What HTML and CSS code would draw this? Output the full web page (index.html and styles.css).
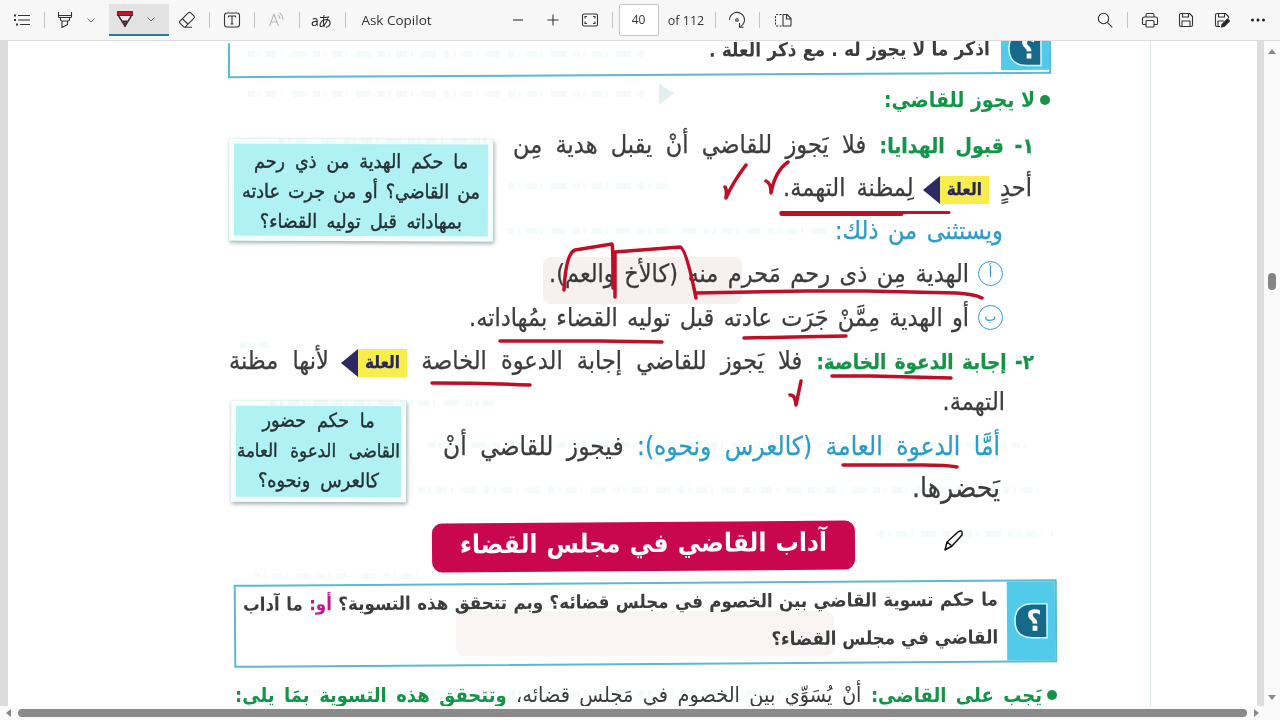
FILE: index.html
```
<!DOCTYPE html>
<html lang="ar">
<head>
    <meta charset="UTF-8">
    <meta name="viewport" content="width=device-width, initial-scale=1.0">
    <title>PDF</title>
    <link rel="stylesheet" href="styles.css">
</head>
<body>
    <header class="toolbar">
        <svg class="icon" viewBox="0 0 20 20"><path d="M6 5.500h12M6 10h12M8 14.500h10"/><path d="M2 5.500h2M2 10h2M4 14.500h2" stroke-width="2"/></svg>
        <i class="sep"></i>
        <svg class="icon" viewBox="0 0 20 20"><path d="M3.500 2v4.500q0 1 1 1h11q1 0 1-1V2M4 5.500h12M5.500 7.500v2q0 1.500 1.500 1.500h6q1.500 0 1.500-1.500v-2M7 11v6.500l5.500-3V11"/></svg>
        <svg class="chevron" viewBox="0 0 8 8"><path d="M.5 2.500 4 6l3.500-3.500"/></svg>
        <i></i>
        <div class="tool-active">
            <svg class="icon" viewBox="0 0 20 20"><path d="M3 3h14l-1 5-6 9.500L4 8z" fill="#eee"/><path d="M2.500 2.500h15v4h-15z" fill="#c4142d" stroke="#8c1424"/><path d="m8 12.500 2 5 2-5z" fill="#c4142d"/><path d="m4 7 3 5h6l3-5"/></svg>
            <svg class="chevron" viewBox="0 0 8 8"><path d="M.5 2.500 4 6l3.500-3.500"/></svg>
        </div>
        <svg class="icon" viewBox="0 0 20 20"><path d="m11 3.200-8 8q-1 1 0 2l3.500 3.500q1 1 2 0l8.500-8.500q1-1 0-2l-3.500-3.500q-1.200-1-2.500.5zM5.500 9l6 5.500M7.500 17.300H15"/></svg>
        <i class="sep"></i>
        <svg class="icon" viewBox="0 0 20 20"><rect x="2.500" y="3" width="15" height="14" rx="2.500"/><path d="M6.500 7.500V6h7v1.500M10 6v8M8.500 14h3"/></svg>
        <i class="sep"></i>
        <svg class="icon faded" viewBox="0 0 20 20"><path d="m2.500 16 4.500-12 4.500 12M4 12h6M11 5q2 1.500 2 4M12.500 3q3.500 2.500 3.500 7"/></svg>
        <i class="sep"></i>
        <span class="translate">aあ</span>
        <i class="sep"></i>
        <span class="label">Ask Copilot</span>
        <i></i>
        <svg class="icon" viewBox="0 0 20 20"><path d="M5 10h10"/></svg>
        <svg class="icon" viewBox="0 0 20 20"><path d="M4.500 10h11M10 4.500v11"/></svg>
        <svg class="icon" viewBox="0 0 20 20"><rect x="2.500" y="4" width="15" height="12" rx="1.500"/><path d="M5 8.500v-2h2M13 6.500h2v2M15 11.500v2h-2M7 13.500H5v-2"/></svg>
        <i class="sep"></i>
        <span class="page-number">40</span>
        <span class="label count">of 112</span>
        <i class="sep"></i>
        <svg class="icon" viewBox="0 0 20 20"><path d="M2.500 10a7.500 7.500 0 1 1 11 6.500M16.500 17.300h-4V13"/><circle cx="10" cy="10" r="1.300"/></svg>
        <i class="sep"></i>
        <svg class="icon" viewBox="0 0 20 20"><path d="M10 4.500h4l4 4V15q0 1-1 1h-7zM13.500 4.500V9H18"/><path d="M8.500 4.500H4Q2.500 4.500 2.500 6v8.500Q2.500 16 4 16h4.500" stroke-dasharray="2 1.300"/></svg>
        <i></i>
        <svg class="icon" viewBox="0 0 20 20"><circle cx="8.500" cy="8.500" r="5.200"/><path d="m12.300 12.300 5 5"/></svg>
        <i class="sep"></i>
        <svg class="icon" viewBox="0 0 20 20"><path d="M6 7V5q0-1.500 1.500-1.500h5Q14 3.500 14 5v2M6 14.500H3.500q-1 0-1-1V9q0-2 2-2h11q2 0 2 2v4.500q0 1-1 1H14"/><rect x="6" y="10.500" width="8" height="6.500" rx="1"/></svg>
        <svg class="icon" viewBox="0 0 20 20"><path d="M3.500 5q0-1.500 1.500-1.500h8.500l3 3V15q0 1.500-1.500 1.500H5Q3.500 16.500 3.500 15zM6.500 3.500V7h6V3.500M6 16.500V11h8v5.500"/></svg>
        <svg class="icon" viewBox="0 0 20 20"><path d="M8 16.500H5Q3.500 16.500 3.500 15V5q0-1.500 1.500-1.500h8.500l3 3v2M6.500 3.500V7h6V3.500M6 16.500V11h6"/><path d="m9.500 17 .5-2.500L15.500 9l2 2-5.500 5.500z" fill="#222"/></svg>
        <svg class="icon" viewBox="0 0 20 20"><g fill="#222" stroke="none"><circle cx="4.500" cy="10" r="1.500"/><circle cx="10" cy="10" r="1.500"/><circle cx="15.500" cy="10" r="1.500"/></g></svg>
    </header>

    <main class="viewer">
        <div class="sheet" dir="rtl">
            <section class="question question-top">
                <div class="badge"><svg viewBox="0 0 36 36"><path d="M34 1v34H20Q2 35 2 18T20 1z"/><text x="21" y="28">؟</text></svg></div>
                <div class="question-text">
                    <p class="line q0">اذكر ما لا يجوز له . مع ذكر العلة .</p>
                </div>
            </section>

            <h2 class="heading"><i class="dot"></i><span class="line h1">لا يجوز للقاضي:</span></h2>

            <section class="row">
                <div class="text">
                    <p class="line t1"><b>١- قبول الهدايا:</b> فلا يَجوز للقاضي أنْ يقبل هدية مِن</p>
                    <p class="line t2">أحدٍ <mark>العلة</mark> لِمظنة التهمة.</p>
                    <p class="line t3 blue">ويستثنى من ذلك:</p>
                </div>
                <aside class="note note-gift">
                    <p class="line">ما حكم الهدية من ذي رحم</p>
                    <p class="line">من القاضي؟ أو من جرت عادته</p>
                    <p class="line">بمهاداته قبل توليه القضاء؟</p>
                </aside>
            </section>

            <div class="item"><span class="circle">أ</span><p class="line t4">الهدية مِن ذى رحم مَحرم منه (كالأخ والعم).</p></div>
            <div class="item"><span class="circle">ب</span><p class="line t5">أو الهدية مِمَّنْ جَرَت عادته قبل توليه القضاء بمُهاداته.</p></div>
            <p class="line t6"><b>٢- إجابة الدعوة الخاصة:</b> فلا يَجوز للقاضي إجابة الدعوة الخاصة <mark>العلة</mark> لأنها مظنة</p>

            <section class="row row-invite">
                <div class="text">
                    <p class="line t7">التهمة.</p>
                    <p class="line t8"><span class="blue">أمَّا الدعوة العامة (كالعرس ونحوه):</span> فيجوز للقاضي أنْ</p>
                    <p class="line t9">يَحضرها.</p>
                </div>
                <aside class="note note-invite">
                    <p class="line">ما حكم حضور</p>
                    <p class="line">القاضى الدعوة العامة</p>
                    <p class="line">كالعرس ونحوه؟</p>
                </aside>
            </section>

            <h1 class="banner"><span class="line">آداب القاضي في مجلس القضاء</span></h1>

            <section class="question question-bottom">
                <div class="badge"><svg viewBox="0 0 36 36"><path d="M34 1v34H20Q2 35 2 18T20 1z"/><text x="21" y="28">؟</text></svg></div>
                <div class="question-text">
                    <p class="line q1">ما حكم تسوية القاضي بين الخصوم في مجلس قضائه؟ وبم تتحقق هذه التسوية؟ <em>أو:</em> ما آداب</p>
                    <p class="line q2">القاضي في مجلس القضاء؟</p>
                </div>
            </section>

            <div class="heading last"><i class="dot"></i><p class="line t10"><b>يَجب على القاضي:</b> أنْ يُسَوِّي بين الخصوم في مَجلس قضائه، <b>وتتحقق هذه التسوية بِمَا يلي:</b></p></div>
        </div>

        <!-- print showing through from the back of the leaf -->
        <svg class="bleed" viewBox="0 0 1250 665">
            <rect x="535" y="216" width="199" height="47" rx="8" fill="#d8b9b0" opacity=".22"/>
            <rect x="448" y="570" width="378" height="45" rx="8" fill="#d8a8b0" opacity=".12"/>
            <g class="bleed-lines">
                <path d="M240 13h400M240 53h400M270 100h215M500 145h160M500 190h320M232 304h28M262 362h225M420 404h600M410 449h620M870 493h175M245 535h170M240 652h560"/>
            </g>
            <path d="m651 43 15 9-15 12z" fill="#b9d8d8" opacity=".4"/>
            <path d="M1142.500 0v665" stroke="#dcebea"/>
        </svg>

        <svg class="ink" viewBox="0 0 1250 665">
            <path d="M758 140q5 2 5 12q4-22 17-31M717 146q2 2 1 11q7-16 20-33" />
            <path d="M773 171.500h168" stroke-width="3"/><path d="M774 172.500h119" stroke-width="5"/>
            <path d="M556 249q2-37 11-40l37-6q1 0 1 44M607 256v-45l65-5q6 1 16 51M688 252q55-1 110-2h60l90 2q18 1 26 5"/>
            <path d="M736 297l50-1 52-1M492 300h100l62 1M824 335h40l79 2M424 342q50 0 98 2M835 424h80q24 0 34 2M782 354q5-1 6 10l5-24"/>
            <g class="pencil"><path d="m937 509 2-8 11-10q5-3 4 3l-10 11zM939 501l5 4"/></g>
        </svg>

        <div class="scroll-v"><i class="arrow up"></i><i class="thumb"></i><i class="arrow down"></i></div>
    </main>

    <footer class="scroll-h"><i class="arrow left"></i><i class="track"></i><i class="arrow right"></i></footer>
</body>
</html>
```
FILE: styles.css
```
* {
    box-sizing: border-box;
}

body {
    margin: 0;
    height: 720px;
    overflow: hidden;
    background-color: #fff;
    font-family: "Open Sans", "Noto Sans", sans-serif;
}

p, h1, h2 {
    margin: 0;
}

/* toolbar */
.toolbar {
    display: grid;
    grid-template-columns: 44px 1px 40px 12px 12px 60px 36px 8px 38px 7px 38px 6px 38px 10px 93px 57px 36px 34px 40px 5px 47px 48px 10px 34px 10px 38px 1fr 36px 9px 36px 36px 36px 36px 4px;
    align-items: center;
    justify-items: center;
    height: 41px;
    background-color: #f7f7f7;
    border-bottom: 1px solid #dcdcdc;
}

.icon {
    width: 20px;
    height: 20px;
    fill: none;
    stroke: #333;
    stroke-width: 1.1;
    stroke-linejoin: round;
}

.faded {
    stroke: #b8b8b8;
}

.chevron {
    width: 8px;
    height: 8px;
    fill: none;
    stroke: #666;
}

.sep {
    width: 1px;
    height: 16px;
    background-color: #c4c4c4;
}

.tool-active {
    display: flex;
    align-items: center;
    gap: 12px;
    align-self: start;
    width: 60px;
    height: 32px;
    margin-top: 4px;
    padding-left: 6px;
    background-color: #e3e3e3;
    border-bottom: 2px solid #2a7a9e;
}

.label {
    font-size: 13.5px;
    color: #333;
    white-space: nowrap;
}

.count {
    font-size: 12.5px;
}

.translate {
    font-family: "Open Sans", "Noto Sans CJK JP", sans-serif;
    font-size: 14px;
    letter-spacing: -1px;
    color: #222;
}

.page-number {
    width: 40px;
    height: 32px;
    border: 1px solid #c8c8c8;
    border-radius: 2px;
    background-color: #fff;
    font-size: 12px;
    line-height: 30px;
    text-align: center;
    color: #333;
}

/* document area */
.viewer {
    position: relative;
    height: 665px;
    overflow: hidden;
    border-left: 8px solid #dcdcdc;
    background-color: #fff;
}

.viewer::before {
    content: "";
    position: absolute;
    left: -8px;
    width: 1px;
    height: 100%;
    background-color: #444;
}

.sheet {
    width: 1250px;
    height: 665px;
    padding-right: 201px;
    color: #3c3c3e;
    font-family: "DejaVu Sans Condensed", "DejaVu Sans", sans-serif;
}

.line {
    display: block;
    font-size: 25px;
    white-space: nowrap;
    text-align: justify;
    text-align-last: justify;
}

.text .line, .item .line, .t6 {
    -webkit-text-stroke: 0.25px;
}

.line b {
    color: #149447;
}

.blue {
    color: #2a9cc8;
}

.question {
    display: flex;
    border: 2px solid #5db9cf;
}

.question-text {
    flex: 1;
}

.question .line {
    font-weight: bold;
    font-size: 18.6px;
}

.badge {
    display: flex;
    align-items: center;
    justify-content: center;
    width: 48px;
    background-color: #52caea;
}

.badge svg {
    width: 36px;
    height: 37px;
}

.badge path {
    fill: #17698a;
    stroke: #d8f7fa;
    stroke-width: 1.5;
}

.badge text {
    fill: #fff;
    font-size: 29px;
    font-weight: bold;
    text-anchor: middle;
}

.question-top {
    width: 823px;
    height: 35px;
    margin-right: 6px;
    border-top: 0;
    transform: rotate(-0.3deg);
}

.question-top .badge {
    height: 31px;
}

.question-top .badge svg {
    margin-top: -13px;
}

.question .q0 {
    width: 281px;
    margin-right: 11px;
    font-size: 19.1px;
    line-height: 19px;
}

.heading {
    display: flex;
    align-items: center;
    gap: 5px;
    height: 48px;
    margin-right: 7px;
    font-weight: normal;
}

.dot {
    width: 10px;
    height: 10px;
    border-radius: 50%;
    background-color: #149447;
}

.h1 {
    width: 151px;
    font-size: 21px;
    font-weight: bold;
    color: #149447;
}

.row {
    display: flex;
    justify-content: space-between;
    width: 828px;
    height: 127px;
}

.t1 {
    width: 521px;
    margin-right: 23px;
    line-height: 42px;
}

.t1 b {
    font-size: 21px;
    word-spacing: -2px;
}

.t2 {
    width: 249px;
    margin-right: 25px;
    line-height: 42px;
}

.t3 {
    width: 168px;
    margin-right: 54px;
    line-height: 43px;
}

mark {
    position: relative;
    display: inline-block;
    height: 28px;
    margin-left: 15px;
    padding: 0 7px;
    background-color: #f7ee4d;
    color: #29265c;
    font-size: 17px;
    font-weight: bold;
    line-height: 27px;
    vertical-align: 1px;
}

mark::after {
    content: "";
    position: absolute;
    top: 0;
    right: 100%;
    border: solid transparent;
    border-width: 14px 17px 14px 0;
    border-right-color: #2c2965;
}

.note {
    border: 5px solid #f6fefe;
    background-color: #b0f2f3;
    box-shadow: 1px 2px 4px #9aa8a8;
    color: #263034;
    transform: rotate(0.2deg);
}

.note .line {
    margin: 0 auto;
    font-size: 19.5px;
    line-height: 30px;
    -webkit-text-stroke: 0.4px;
}

.note-gift {
    width: 264px;
    height: 102px;
    margin-top: 15px;
    padding-top: 3px;
}

.note-gift .line:nth-child(1) { width: 214px; }
.note-gift .line:nth-child(2) { width: 238px; }
.note-gift .line:nth-child(3) { width: 202px; }

.item {
    display: flex;
    align-items: center;
    gap: 9px;
    height: 44px;
    margin-right: 54px;
}

.circle {
    width: 25px;
    height: 25px;
    border: 1px solid #2a9cc8;
    border-radius: 50%;
    color: #2a9cc8;
    font-size: 14px;
    line-height: 21px;
    text-align: center;
}

.t4 {
    width: 420px;
}

.t5 {
    width: 500px;
}

.t6 {
    width: 805px;
    margin-right: 23px;
    line-height: 43px;
}

.t6 b {
    font-size: 20.5px;
    word-spacing: -5px;
}

.row-invite {
    width: 826px;
    height: 138px;
}

.t7 {
    width: 61px;
    margin-right: 52px;
    line-height: 35px;
}

.t8 {
    width: 557px;
    margin-right: 57px;
    font-size: 26px;
    line-height: 54px;
}

.t9 {
    width: 92px;
    margin-right: 57px;
    font-size: 28px;
    line-height: 29px;
}

.note-invite {
    width: 175px;
    height: 101px;
    margin-top: 17px;
}

.note-invite .line:nth-child(1) { width: 112px; }
.note-invite .line:nth-child(2) { width: 163px; font-size: 18.5px; }
.note-invite .line:nth-child(3) { width: 121px; }

.banner {
    width: 423px;
    height: 49px;
    margin-right: 202px;
    padding: 0 28px;
    border-radius: 10px;
    background-color: #c9074f;
    color: #fff;
    transform: rotate(-0.4deg);
}

.banner .line {
    font-size: 26px;
    line-height: 42px;
}

.question-bottom {
    width: 823px;
    height: 83px;
    margin-top: 11px;
    transform: rotate(-0.4deg);
}

.question .q1 {
    width: 755px;
    margin-right: 9px;
    line-height: 36px;
}

.question .q2 {
    width: 226px;
    margin-right: 9px;
    line-height: 39px;
}

em {
    color: #c2188a;
    font-style: normal;
}

.last {
    margin-right: 0;
    height: 59px;
}

.t10 {
    width: 807px;
    font-size: 21.5px;
}

.t10 b {
    font-size: 20px;
}

/* overlays on the page */
.bleed, .ink {
    position: absolute;
    top: 0;
    left: 0;
    width: 1250px;
    height: 665px;
    fill: none;
}

.bleed {
    mix-blend-mode: multiply;
}

.bleed-lines {
    stroke: #e6f6f6;
    stroke-width: 6;
    stroke-dasharray: 7 3 3 5 11 4 2 8 15 7;
    opacity: 0.4;
}

.ink {
    stroke: #c00d28;
    stroke-width: 3.5;
    stroke-linecap: round;
    stroke-linejoin: round;
}

.pencil {
    fill: #fff;
    stroke: #111;
    stroke-width: 1.5;
}

/* scrollbars */
.scroll-v {
    position: absolute;
    top: 0;
    right: 0;
    display: flex;
    flex-direction: column;
    align-items: center;
    width: 23px;
    height: 665px;
    padding: 8px 0 6px;
    border-left: 7px solid #dedede;
    background-color: #fafafa;
}

.thumb {
    width: 8px;
    height: 17px;
    margin: auto;
    margin-top: 219px;
    border-radius: 4px;
    background-color: #858585;
}

.arrow {
    border: 4px solid transparent;
}

.up { border-top: 0; border-bottom: 5px solid #888; }
.down { border-bottom: 0; border-top: 5px solid #888; }
.left { border-left: 0; border-right: 5px solid #888; }
.right { border-right: 0; border-left: 5px solid #888; }

.scroll-h {
    display: flex;
    align-items: center;
    gap: 7px;
    height: 14px;
    padding: 0 21px 0 6px;
    background-color: #fafafa;
}

.track {
    flex: 1;
    height: 8px;
    border-radius: 4px;
    background-color: #8a8a8a;
}
```
